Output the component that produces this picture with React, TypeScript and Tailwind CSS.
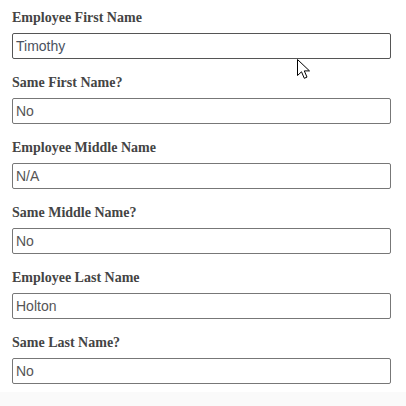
import React from "react";

const fields = [
  { label: "Employee First Name", value: "Timothy", focus: true },
  { label: "Same First Name?", value: "No" },
  { label: "Employee Middle Name", value: "N/A" },
  { label: "Same Middle Name?", value: "No" },
  { label: "Employee Last Name", value: "Holton" },
  { label: "Same Last Name?", value: "No" },
];

export default function App() {
  return (
    <div className="relative w-[406px] h-[406px] bg-white overflow-hidden">
      <div className="pl-[12px] pr-[15px] pt-[7px]">
        {fields.map((f) => (
          <div key={f.label} className="mb-[13px]">
            <div
              className="h-[20px] leading-[20px] text-[14px] font-bold text-[#444] mb-[6px]"
              style={{ fontFamily: '"Liberation Serif", "Times New Roman", serif' }}
            >
              <span className="relative top-[1px]">{f.label}</span>
            </div>
            <div
              className={
                "h-[26px] rounded-[2px] border flex items-center px-[3px] text-[14px] " +
                (f.focus ? "border-[#555] text-[#4a5260]" : "border-[#777] text-[#555]")
              }
              style={{ fontFamily: '"Liberation Sans", Arial, sans-serif' }}
            >
              {f.value}
            </div>
          </div>
        ))}
      </div>
      <div className="absolute left-0 right-0 top-[392px] bottom-0 bg-[#fafafa]" />
      <svg
        className="absolute left-[297px] top-[59px]"
        width="14"
        height="21"
        viewBox="0 0 14 21"
      >
        <path
          d="M0.5 0.5 L0.5 16.5 L4.5 12.8 L7.3 19.3 L10 18.1 L7.3 11.9 L12.5 11.9 Z"
          fill="#fff"
          stroke="#000"
          strokeWidth="1"
          strokeLinejoin="miter"
        />
      </svg>
    </div>
  );
}
